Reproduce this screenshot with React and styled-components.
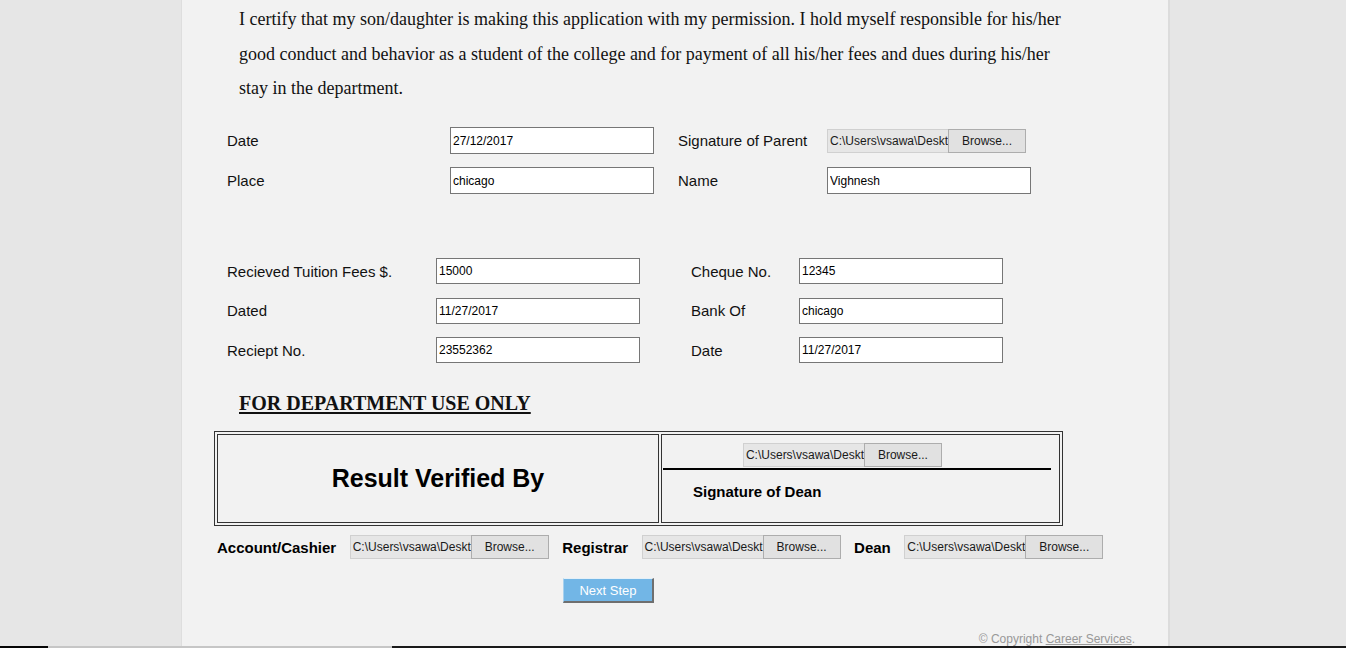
import styled, {createGlobalStyle} from 'styled-components';

const feeRows = [
  {label: 'Recieved Tuition Fees $.', value: '15000', label2: 'Cheque No.', value2: '12345'},
  {label: 'Dated', value: '11/27/2017', label2: 'Bank Of', value2: 'chicago'},
  {label: 'Reciept No.', value: '23552362', label2: 'Date', value2: '11/27/2017'},
];

const FileField = ({path = 'C:\\Users\\vsawa\\Deskt'}) => (
  <FileWrap>
    <FilePath>{path}</FilePath>
    <BrowseButton type="button">Browse...</BrowseButton>
  </FileWrap>
);

const App = () => {
  return (
    <Page>
      <GlobalStyle />
      <Panel>
        <Certify>
          I certify that my son/daughter is making this application with my
          permission. I hold myself responsible for his/her good conduct and
          behavior as a student of the college and for payment of all his/her
          fees and dues during his/her stay in the department.
        </Certify>

        <ParentForm>
          <Label>Date</Label>
          <TextInput defaultValue="27/12/2017" />
          <Label $indent>Signature of Parent</Label>
          <FileField />
          <Label>Place</Label>
          <TextInput defaultValue="chicago" />
          <Label $indent>Name</Label>
          <TextInput defaultValue="Vighnesh" />
        </ParentForm>

        <FeeForm>
          {feeRows.map(row => (
            <FeeRow key={row.label}>
              <Label>{row.label}</Label>
              <TextInput $short defaultValue={row.value} />
              <Label>{row.label2}</Label>
              <TextInput $short defaultValue={row.value2} />
            </FeeRow>
          ))}
        </FeeForm>

        <DeptHeading>FOR DEPARTMENT USE ONLY</DeptHeading>

        <VerifyTable>
          <VerifyCell $wide>
            <VerifyTitle>Result Verified By</VerifyTitle>
          </VerifyCell>
          <VerifyCell>
            <DeanUpload>
              <FileField />
            </DeanUpload>
            <SignLine />
            <DeanLabel>Signature of Dean</DeanLabel>
          </VerifyCell>
        </VerifyTable>

        <SignRow>
          <BoldLabel>Account/Cashier</BoldLabel>
          <FileField />
          <BoldLabel>Registrar</BoldLabel>
          <FileField />
          <BoldLabel>Dean</BoldLabel>
          <FileField />
        </SignRow>

        <NextButton type="button">Next Step</NextButton>

        <Copyright>
          © Copyright <CopyLink href="#">Career Services</CopyLink>.
        </Copyright>
      </Panel>
      <TaskStrip />
    </Page>
  );
};

export default App;

const GlobalStyle = createGlobalStyle`
  html, body {
    margin: 0;
    padding: 0;
  }
  body {
    background: #e6e6e6;
    font-family: 'Liberation Sans', Arial, sans-serif;
    color: #000;
  }
`;

const Page = styled.div`
  height: 648px;
  display: flex;
  flex-direction: column;
  overflow: hidden;
  background: #e6e6e6;
`;

const Panel = styled.div`
  flex: 1;
  min-height: 0;
  overflow: hidden;
  width: 986px;
  margin-left: 181px;
  background: #f2f2f2;
  border-left: 1px solid #dedede;
  border-right: 2px solid #dcdcdc;
  display: flex;
  flex-direction: column;
`;

const Certify = styled.p`
  margin: 2px 0 0 57px;
  width: 840px;
  font-family: 'Liberation Serif', 'Times New Roman', serif;
  font-size: 18px;
  line-height: 34.5px;
  color: #111;
`;

const ParentForm = styled.div`
  margin: 15px 0 0 45px;
  display: grid;
  grid-template-columns: 223px 204px 173px 204px;
  grid-auto-rows: 40px;
  align-items: center;
`;

const FeeForm = styled.div`
  margin: 51px 0 0 45px;
  display: flex;
  flex-direction: column;
`;

const FeeRow = styled.div`
  height: 39.5px;
  display: grid;
  grid-template-columns: 209px 204px 51px 108px 204px;
  align-items: center;

  & > :nth-child(3) {
    grid-column: 4;
  }
`;

const Label = styled.span`
  padding-left: ${p => (p.$indent ? '24px' : '0')};
  font-size: 15px;
  color: #111;
  white-space: nowrap;
`;

const TextInput = styled.input`
  box-sizing: border-box;
  width: 204px;
  height: ${p => (p.$short ? '26px' : '27px')};
  margin: 0;
  padding: 0 2px;
  border: 1px solid #767676;
  background: #fff;
  font-family: 'Liberation Sans', Arial, sans-serif;
  font-size: 12px;
  color: #000;
  outline: none;
`;

const FileWrap = styled.div`
  display: flex;
  height: 24px;
  width: 199px;
`;

const FilePath = styled.span`
  box-sizing: border-box;
  width: 121px;
  height: 24px;
  padding-left: 2px;
  display: flex;
  align-items: center;
  overflow: hidden;
  white-space: nowrap;
  background: #e6e6e6;
  border: 1px solid #d0d0d0;
  border-right: none;
  font-size: 12px;
  color: #1a1a1a;
`;

const BrowseButton = styled.button`
  box-sizing: border-box;
  width: 78px;
  height: 24px;
  margin: 0;
  padding: 0;
  background: #e1e1e1;
  border: 1px solid #adadad;
  font-family: 'Liberation Sans', Arial, sans-serif;
  font-size: 12px;
  color: #1a1a1a;
`;

const DeptHeading = styled.h3`
  margin: 22px 0 0 57px;
  font-family: 'Liberation Serif', 'Times New Roman', serif;
  font-size: 20px;
  line-height: 23px;
  font-weight: bold;
  text-decoration: underline;
  text-underline-offset: 2px;
  color: #111;
`;

const VerifyTable = styled.div`
  margin: 16px 0 0 32px;
  width: 849px;
  height: 95px;
  box-sizing: border-box;
  padding: 2px;
  border: 1px solid #333;
  display: flex;
  gap: 2px;
`;

const VerifyCell = styled.div`
  box-sizing: border-box;
  width: ${p => (p.$wide ? '443px' : '400px')};
  height: 89px;
  border: 1px solid #333;
  display: flex;
  flex-direction: column;
  justify-content: ${p => (p.$wide ? 'center' : 'flex-start')};
  align-items: ${p => (p.$wide ? 'center' : 'stretch')};
`;

const VerifyTitle = styled.h2`
  margin: 0;
  font-size: 25px;
  font-weight: bold;
`;

const DeanUpload = styled.div`
  margin: 8px 0 0 81px;
`;

const SignLine = styled.div`
  height: 2px;
  margin: 1px 8px 0 1px;
  background: #000;
`;

const DeanLabel = styled.span`
  margin: 13px 0 0 31px;
  font-size: 15px;
  font-weight: bold;
`;

const SignRow = styled.div`
  margin: 9px 0 0 35px;
  display: flex;
  align-items: center;
  gap: 13.5px;
`;

const BoldLabel = styled.span`
  font-size: 15px;
  font-weight: bold;
  white-space: nowrap;
`;

const NextButton = styled.button`
  align-self: flex-start;
  margin: 19px 0 0 381px;
  width: 91px;
  height: 28px;
  padding: 0;
  background: #72b6e6;
  border-style: solid;
  border-width: 1px 2px 2px 1px;
  border-color: #e4f0f8 #6f6f6f #6f6f6f #a8d1ee;
  font-family: 'Liberation Sans', Arial, sans-serif;
  font-size: 13px;
  color: #fff;
`;

const Copyright = styled.div`
  margin: 29px 33px 0 0;
  text-align: right;
  font-size: 12px;
  line-height: 14px;
  color: #999;
`;

const CopyLink = styled.a`
  color: #999;
  text-decoration: underline;
`;

const TaskStrip = styled.div`
  height: 2px;
  flex-shrink: 0;
  background: linear-gradient(
    to right,
    #050505 0 48px,
    #c6c6c6 48px 392px,
    #1a1a1a 392px
  );
`;
